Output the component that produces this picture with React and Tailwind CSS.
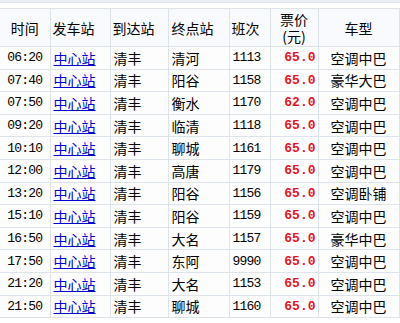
const rows = [
  ['06:20', '清河', '1113', '65.0', '空调中巴'],
  ['07:40', '阳谷', '1158', '65.0', '豪华大巴'],
  ['07:50', '衡水', '1170', '62.0', '空调中巴'],
  ['09:20', '临清', '1118', '65.0', '空调中巴'],
  ['10:10', '聊城', '1161', '65.0', '空调中巴'],
  ['12:00', '高唐', '1179', '65.0', '空调中巴'],
  ['13:20', '阳谷', '1156', '65.0', '空调卧铺'],
  ['15:10', '阳谷', '1159', '65.0', '空调中巴'],
  ['16:50', '大名', '1157', '65.0', '豪华中巴'],
  ['17:50', '东阿', '9990', '65.0', '空调中巴'],
  ['21:20', '大名', '1153', '65.0', '空调中巴'],
  ['21:50', '聊城', '1160', '65.0', '空调中巴'],
]

const cjk = "font-['Noto_Sans_CJK_SC','Noto_Sans',sans-serif]"
const mono = "font-['Liberation_Mono',monospace]"

export default function App() {
  return (
    <div className={`w-[400px] h-[323px] overflow-hidden bg-white ${cjk} text-[14px] text-black`}>
      <div className="h-[3px] bg-[#e9eef5] border-b border-[#dfe5ee]" />
      <table className="mt-[5px] w-[399px] table-fixed border-collapse">
        <colgroup>
          <col className="w-[50px]" />
          <col className="w-[60px]" />
          <col className="w-[58px]" />
          <col className="w-[61px]" />
          <col className="w-[41px]" />
          <col className="w-[48px]" />
          <col className="w-[81px]" />
        </colgroup>
        <thead>
          <tr className="h-[38px] bg-[#f8fafd]">
            <th className="border border-[#dde3eb] border-l-0 font-normal text-center leading-none">时间</th>
            <th className="border border-[#dde3eb] font-normal text-left pl-[2px] leading-none">发车站</th>
            <th className="border border-[#dde3eb] font-normal text-left pl-[2px] leading-none">到达站</th>
            <th className="border border-[#dde3eb] font-normal text-left pl-[3px] leading-none">终点站</th>
            <th className="border border-[#dde3eb] font-normal text-left pl-[2px] leading-none">班次</th>
            <th className="border border-[#dde3eb] font-normal text-center leading-[17px]">票价<br />(元)</th>
            <th className="border border-[#dde3eb] font-normal text-center leading-none">车型</th>
          </tr>
        </thead>
        <tbody>
          {rows.map(([time, dest, no, price, type]) => (
            <tr key={time} className="h-[22.6px] bg-[#fdfdfe]">
              <td className={`border border-[#dde3eb] border-l-0 text-center ${mono} text-[13px] tracking-[-0.8px] leading-none`}>{time}</td>
              <td className="border border-[#dde3eb] pl-[3px] leading-none">
                <a href="#" className="text-[#0000cc] underline underline-offset-1">中心站</a>
              </td>
              <td className="border border-[#dde3eb] pl-[3px] leading-none">清丰</td>
              <td className="border border-[#dde3eb] pl-[3px] leading-none">{dest}</td>
              <td className={`border border-[#dde3eb] pl-[3px] ${mono} text-[13px] tracking-[-0.8px] leading-none`}>{no}</td>
              <td className={`border border-[#dde3eb] text-right pr-[2px] ${mono} text-[13px] font-bold text-[#e0161e] leading-none`}>{price}</td>
              <td className="border border-[#dde3eb] text-center leading-none">{type}</td>
            </tr>
          ))}
        </tbody>
      </table>
    </div>
  )
}
